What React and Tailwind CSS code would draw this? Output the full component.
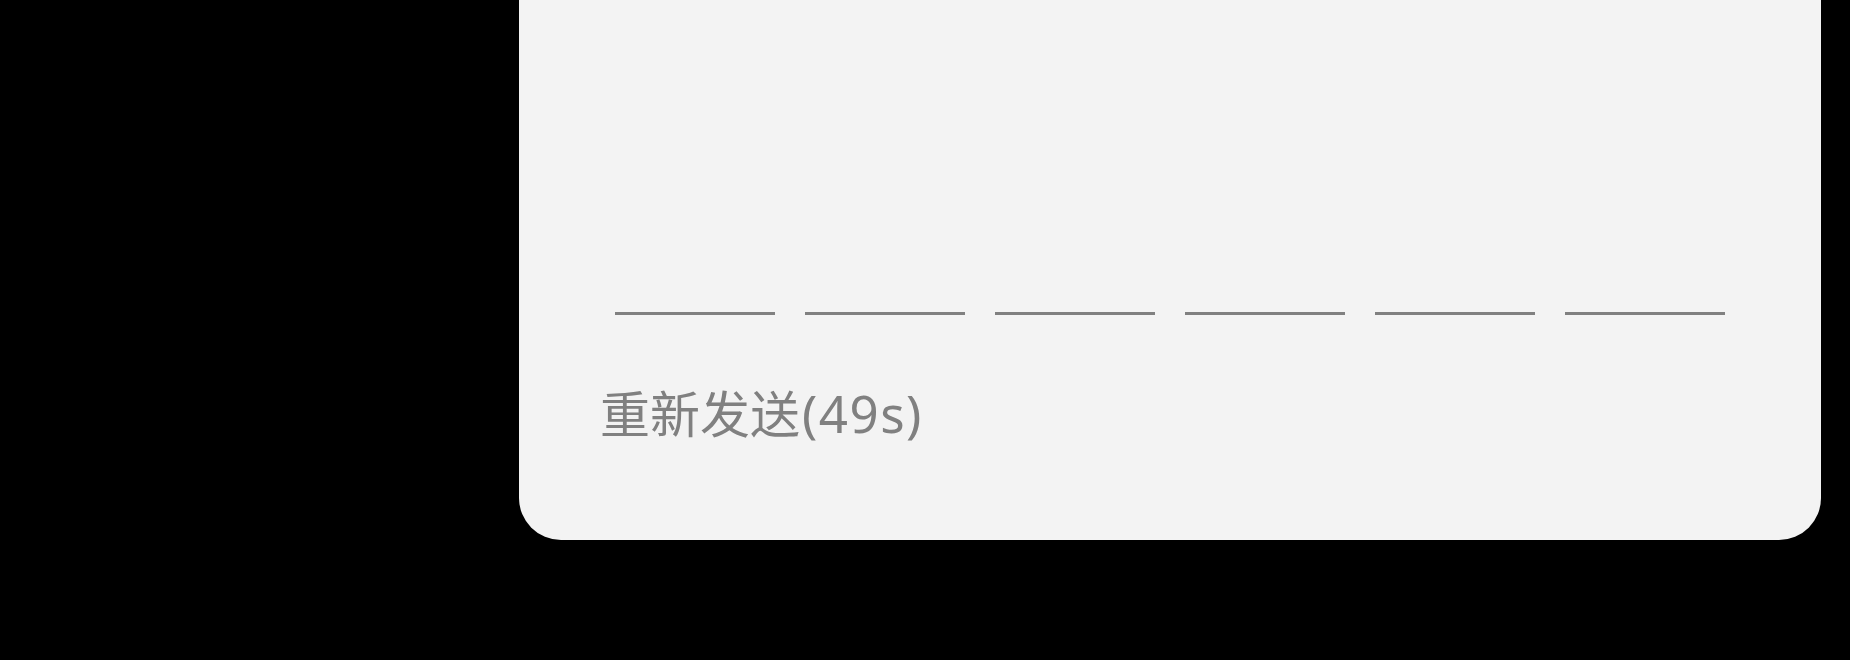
export default function App() {
  const slots = [0, 1, 2, 3, 4, 5];
  return (
    <div className="w-[1850px] h-[660px] bg-black flex items-start">
      <div className="ml-[519px] w-[1302px] h-[540px] bg-[#f3f3f3] rounded-b-[42px] flex flex-col">
        {/* code input underlines */}
        <div className="mt-[312px] px-[96px] flex gap-[30px]">
          {slots.map(i => (
            <div key={i} className="flex-1 h-[3px] bg-[#808080]"></div>
          ))}
        </div>
        <div
          className="mt-[73px] pl-[81px] text-[50px] leading-none text-[#808080]"
          style={{ fontFamily: '"Noto Sans", "Noto Sans CJK SC", sans-serif' }}
        >
          重新发送<span className="pl-[2px] tracking-[1.5px] text-[51px]">(49s)</span>
        </div>
      </div>
    </div>
  );
}
